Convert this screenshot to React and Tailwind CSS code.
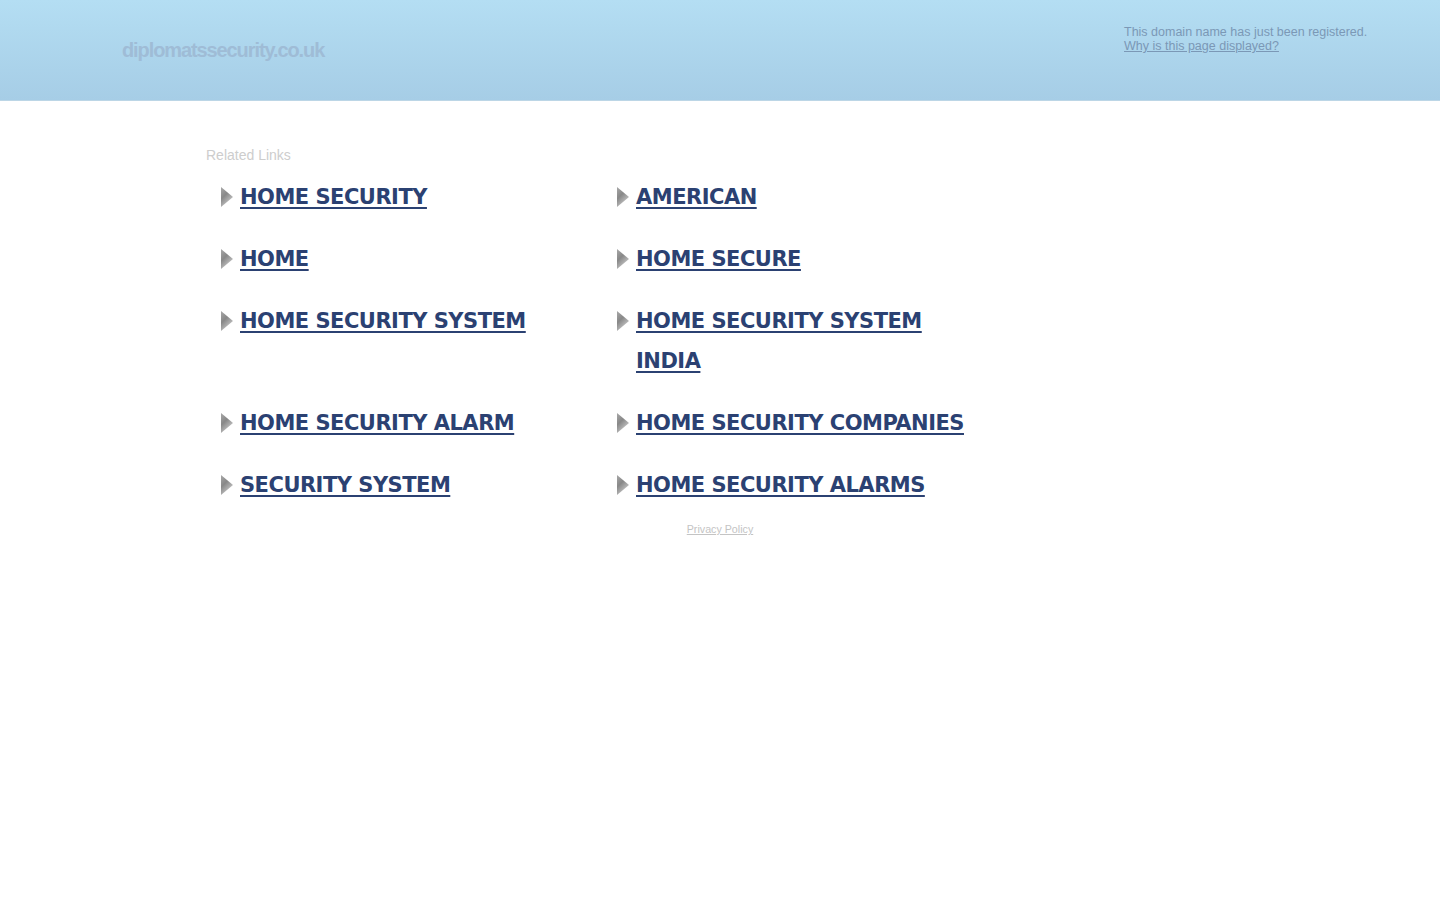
import React from 'react';

const links = [
  ['HOME SECURITY', 'AMERICAN'],
  ['HOME', 'HOME SECURE'],
  ['HOME SECURITY SYSTEM', 'HOME SECURITY SYSTEM INDIA'],
  ['HOME SECURITY ALARM', 'HOME SECURITY COMPANIES'],
  ['SECURITY SYSTEM', 'HOME SECURITY ALARMS'],
];

function Arrow() {
  return (
    <svg width="14" height="22" viewBox="0 0 14 22" className="shrink-0 mt-[9px]">
      <defs>
        <linearGradient id="ag" x1="0" y1="0" x2="0.6" y2="1">
          <stop offset="0" stopColor="#a8a8a8" />
          <stop offset="0.45" stopColor="#888888" />
          <stop offset="1" stopColor="#d0d0d0" />
        </linearGradient>
      </defs>
      <polygon points="1,1 13,11 1,21" fill="url(#ag)" />
    </svg>
  );
}

function Item({ text }) {
  return (
    <div className="flex gap-[6px] pl-[14px] mb-[22px]">
      <Arrow />
      <a href="#" className="text-[21px] leading-[40px] font-bold tracking-[-0.5px] text-[#2b4172] underline underline-offset-[3px] decoration-[2px] max-w-[345px]" style={{ fontFamily: 'Tahoma, "DejaVu Sans", Verdana, sans-serif' }}>
        {text}
      </a>
    </div>
  );
}

export default function App() {
  return (
    <div className="min-h-screen bg-white" style={{ fontFamily: '"Liberation Sans", Arial, sans-serif' }}>
      <div className="h-[101px] bg-gradient-to-b from-[#b4def3] to-[#a6cde6] border-b border-[#bcd6e6] flex justify-between">
        <div className="pl-[122px] pt-[35px] text-[20px] font-bold tracking-[-1.1px] text-[#9fbcd6]">diplomatssecurity.co.uk</div>
        <div className="pr-[62px] pt-[25px] text-[12.5px] leading-[14px] text-[#7b98b6] w-[316px]">
          <div>This domain name has just been registered.</div>
          <a href="#" className="underline">Why is this page displayed?</a>
        </div>
      </div>
      <div className="pl-[206px] pt-[44px]">
        <div className="text-[14px] text-[#cdcdcd] mb-[11px]">Related Links</div>
        <div className="flex flex-col">
          {links.map((row, i) => (
            <div key={i} className="flex">
              <div className="w-[396px]"><Item text={row[0]} /></div>
              <div className="w-[396px]"><Item text={row[1]} /></div>
            </div>
          ))}
        </div>
      </div>
      <div className="text-center -mt-[11px]">
        <a href="#" className="text-[10.7px] text-[#c4c4c4] underline">Privacy Policy</a>
      </div>
    </div>
  );
}
